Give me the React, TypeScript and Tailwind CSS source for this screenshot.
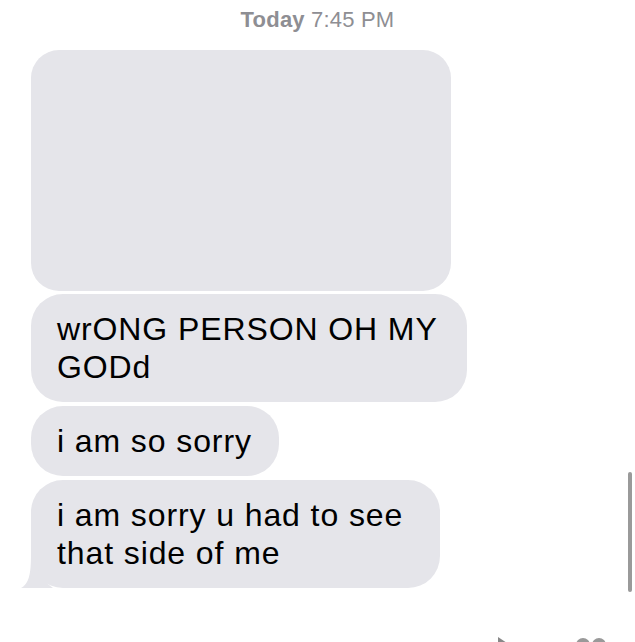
import React from "react";

const bubble = "bg-[#e5e5ea] text-black text-[32px] leading-[38px] tracking-[0.9px] py-4 pl-[26px] pr-[27px]";

export default function App() {
  return (
    <div
      className="relative w-[635px] h-[642px] overflow-hidden bg-white"
      style={{ fontFamily: '"Liberation Sans", Arial, sans-serif' }}
    >
      <div className="pt-[7px] text-center text-[22px] leading-[26px] tracking-[0.2px] text-[#8e8e93]">
        <span className="font-bold">Today</span> 7:45 PM
      </div>
      <div className="flex flex-col items-start gap-[4px] pl-[31px] pt-[17px]">
        <div className="w-[420px] h-[241px] rounded-[28px] bg-[#e5e5ea] mb-[-1px]" />
        <div className={`${bubble} w-[436px] rounded-[32px]`}>wrONG PERSON OH MY GODd</div>
        <div className={`${bubble} rounded-[32px]`}>i am so sorry</div>
        <div className={`${bubble} relative w-[409px] rounded-[32px]`}>
          i am sorry u had to see that side of me
          <svg
            className="absolute left-[-10px] bottom-0"
            width="40"
            height="34"
            viewBox="0 0 40 34"
          >
            <path
              d="M10 0 L14 0 C14 14 20 26 32 34 L0 34 C8 30 10 20 10 0 Z"
              fill="#e5e5ea"
            />
          </svg>
        </div>
      </div>
      <div className="absolute right-[3px] top-[472px] w-[4px] h-[120px] rounded-full bg-[#9a9a9a]" />
      <div className="absolute left-[498px] top-[637px] w-0 h-0 border-l-[12px] border-l-[#888] border-t-[8px] border-t-transparent border-b-[8px] border-b-transparent" />
      <div className="absolute left-[576px] top-[638px] flex gap-[2px]">
        <div className="w-[14px] h-[14px] rounded-full bg-[#999]" />
        <div className="w-[14px] h-[14px] rounded-full bg-[#999]" />
      </div>
    </div>
  );
}
